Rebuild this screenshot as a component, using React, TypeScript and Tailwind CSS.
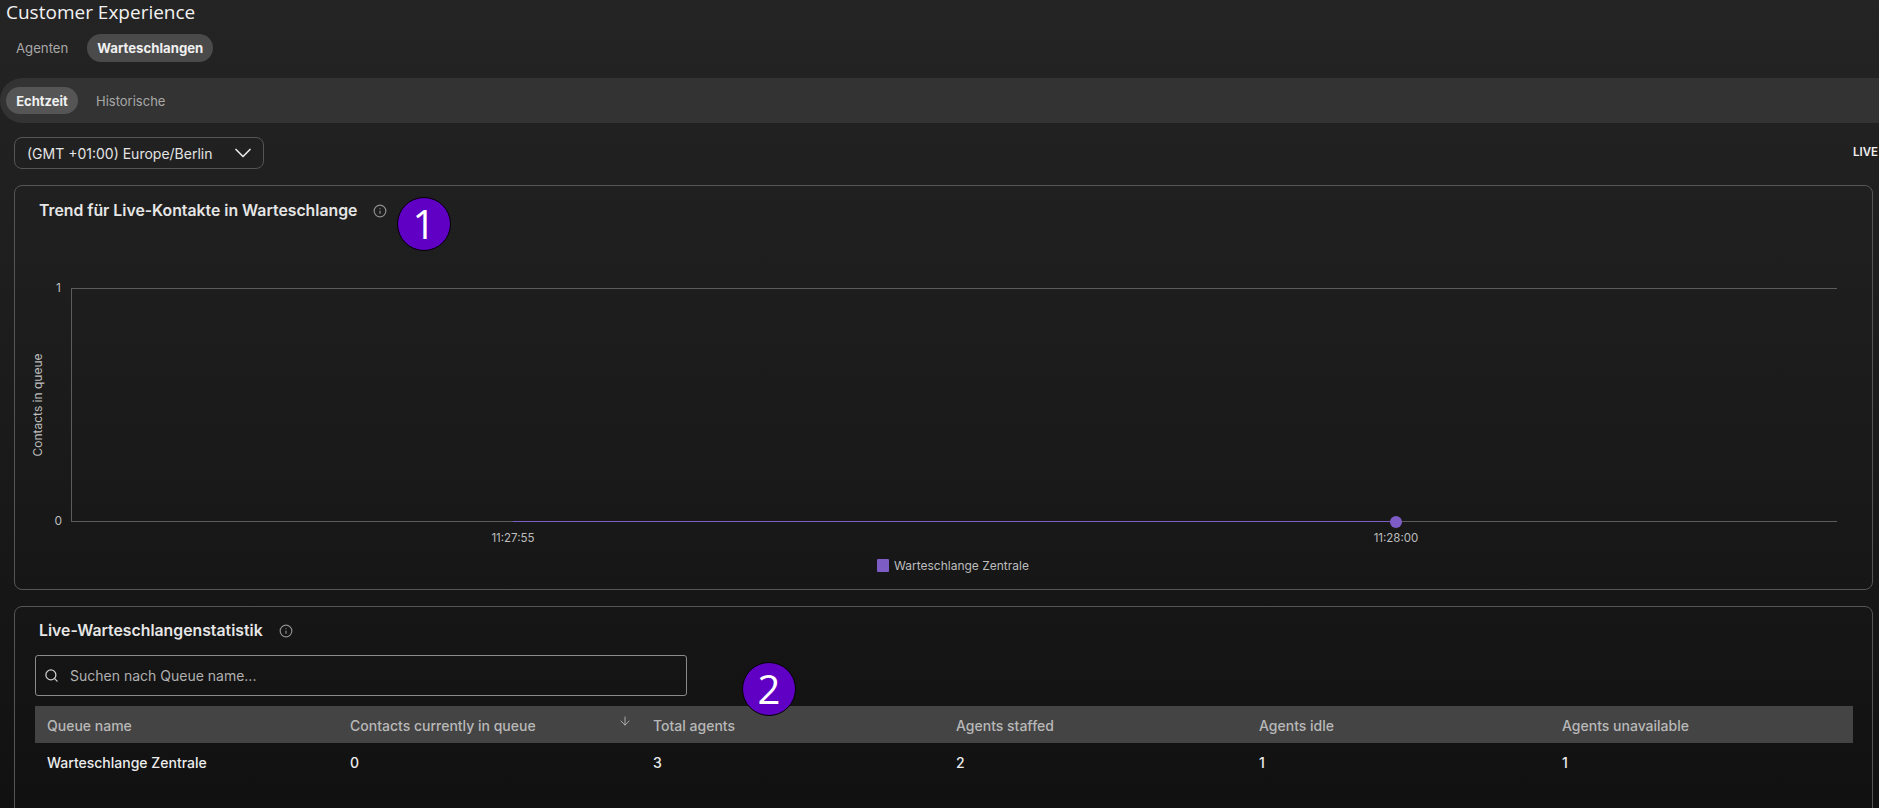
import React from 'react'
import { ArrowDown, ChevronDown, Info, Search } from 'lucide-react'

const columns = [
  'Queue name',
  'Contacts currently in queue',
  'Total agents',
  'Agents staffed',
  'Agents idle',
  'Agents unavailable',
]

const row = ['Warteschlange Zentrale', '0', '3', '2', '1', '1']

function Badge({ value, className }: { value: string; className: string }) {
  return (
    <div
      className={`absolute flex h-[54px] w-[54px] items-center justify-center rounded-full border border-black bg-[#5f00c4] text-[40px] leading-none text-white font-['Open_Sans',sans-serif] ${className}`}
    >
      {value}
    </div>
  )
}

// Chart is drawn at real pixel size, 1857 wide inside the card
function TrendChart() {
  return (
    <svg width="1857" height="330" className="block" fontFamily="Inter, sans-serif">
      <g transform="translate(0 10)">
        <line x1="56.5" y1="3" x2="56.5" y2="236.5" stroke="#5c5c5c" />
        <line x1="56" y1="3.5" x2="1822" y2="3.5" stroke="#5c5c5c" />
        <line x1="56" y1="236.5" x2="1822" y2="236.5" stroke="#5c5c5c" />
        <line x1="498" y1="236.5" x2="1381" y2="236.5" stroke="#7e5cc6" />
        <ellipse cx="1381" cy="237" rx="6" ry="6" fill="#7e5cc6" />
        <text x="46" y="7" fontSize="12" fill="#bdbdbd" textAnchor="end">1</text>
        <text x="47" y="240" fontSize="12" fill="#bdbdbd" textAnchor="end">0</text>
        <text x="27" y="120" fontSize="12" fill="#bdbdbd" textAnchor="middle" transform="rotate(-90 27 120)">Contacts in queue</text>
        <text x="498" y="257" fontSize="11.5" fill="#bdbdbd" textAnchor="middle">11:27:55</text>
        <text x="1381" y="257" fontSize="11.5" fill="#bdbdbd" textAnchor="middle">11:28:00</text>
        <rect x="862" y="274" width="12" height="13" rx="1" fill="#7e5cc6" />
        <text x="879" y="285" fontSize="12" fill="#bdbdbd">Warteschlange Zentrale</text>
      </g>
    </svg>
  )
}

export default function App() {
  return (
    <div className="relative h-[808px] w-[1879px] overflow-hidden bg-gradient-to-b from-[#242424] via-[#1b1b1b] to-[#111111] font-['Inter',sans-serif] text-white">
      <h1 className="pl-[6px] text-[19px] leading-[24px] text-[#f2f2f2] font-['Open_Sans',sans-serif]">
        Customer Experience
      </h1>

      <div className="mt-[10px] flex items-center gap-[19px] pl-4 pt-0 text-[13.2px]">
        <span className="pt-[2px] text-[#a8a8a8]">Agenten</span>
        <span className="flex h-7 w-[126px] items-center justify-center rounded-full bg-[#4a4a4a] pt-px font-bold text-[#f0f0f0]">
          Warteschlangen
        </span>
      </div>

      <div className="mt-[16px] flex h-[45px] items-center gap-[18px] rounded-l-full bg-[#333333] pl-[6px] text-[13px]">
        <span className="flex h-[27px] w-[72px] items-center justify-center rounded-full bg-[#555555] pt-[2px] font-bold text-[#f0f0f0]">
          Echtzeit
        </span>
        <span className="pt-[3px] text-[#a8a8a8]">Historische</span>
      </div>

      <div className="mt-[14px] flex items-center justify-between pl-[14px] pr-px">
        <div className="flex h-8 w-[250px] items-center justify-between rounded-lg border border-[#555555] pl-3 pr-[6px] text-[14px] text-[#e4e4e4]">
          <span>(GMT +01:00) Europe/Berlin</span>
          <ChevronDown className="h-7 w-7" strokeWidth={1.5} />
        </div>
        <span className="text-[11.5px] font-semibold text-[#f0f0f0]">LIVE</span>
      </div>

      <section className="ml-[14px] mr-[6px] mt-4 h-[405px] rounded-lg border border-[#555555]">
        <div className="flex h-[49px] items-center pl-6">
          <h2 className="text-[15.8px] font-semibold text-[#e6e6e6]">Trend für Live-Kontakte in Warteschlange</h2>
          <Info className="ml-4 h-[14px] w-[14px] text-[#8f8f8f]" />
        </div>
        <div className="pt-[40px]">
          <TrendChart />
        </div>
      </section>

      <section className="ml-[14px] mr-[6px] mt-4 h-[300px] rounded-lg border border-[#555555] pl-5 pr-[19px]">
        <div className="flex h-[48px] items-center pl-[4px]">
          <h2 className="text-[15.8px] font-semibold text-[#e6e6e6]">Live-Warteschlangenstatistik</h2>
          <Info className="ml-4 h-[14px] w-[14px] text-[#8f8f8f]" />
        </div>
        <div className="flex h-[41px] w-[652px] items-center gap-[11px] rounded-[3px] border border-[#8a8a8a] pl-2 text-[14px] text-[#b0b0b0]">
          <Search className="h-[15px] w-[15px] text-[#d0d0d0]" />
          <span>Suchen nach Queue name...</span>
        </div>
        <div className="relative mt-[10px] grid h-[37px] grid-cols-[repeat(6,303px)] items-center bg-[#444444] pl-3 pt-[2px] text-[14px] font-medium text-[#b8b8b8]">
          {columns.map((col) => (
            <span key={col}>{col}</span>
          ))}
          <ArrowDown className="absolute left-[583px] top-[8px] h-[14px] w-[14px] text-[#b8b8b8]" strokeWidth={1.5} />
        </div>
        <div className="grid h-[38px] grid-cols-[repeat(6,303px)] items-center pl-3 text-[14px] font-medium text-[#ececec]">
          {row.map((cell, i) => (
            <span key={i}>{cell}</span>
          ))}
        </div>
      </section>

      <Badge value="1" className="left-[397px] top-[197px]" />
      <Badge value="2" className="left-[742px] top-[662px]" />
    </div>
  )
}
